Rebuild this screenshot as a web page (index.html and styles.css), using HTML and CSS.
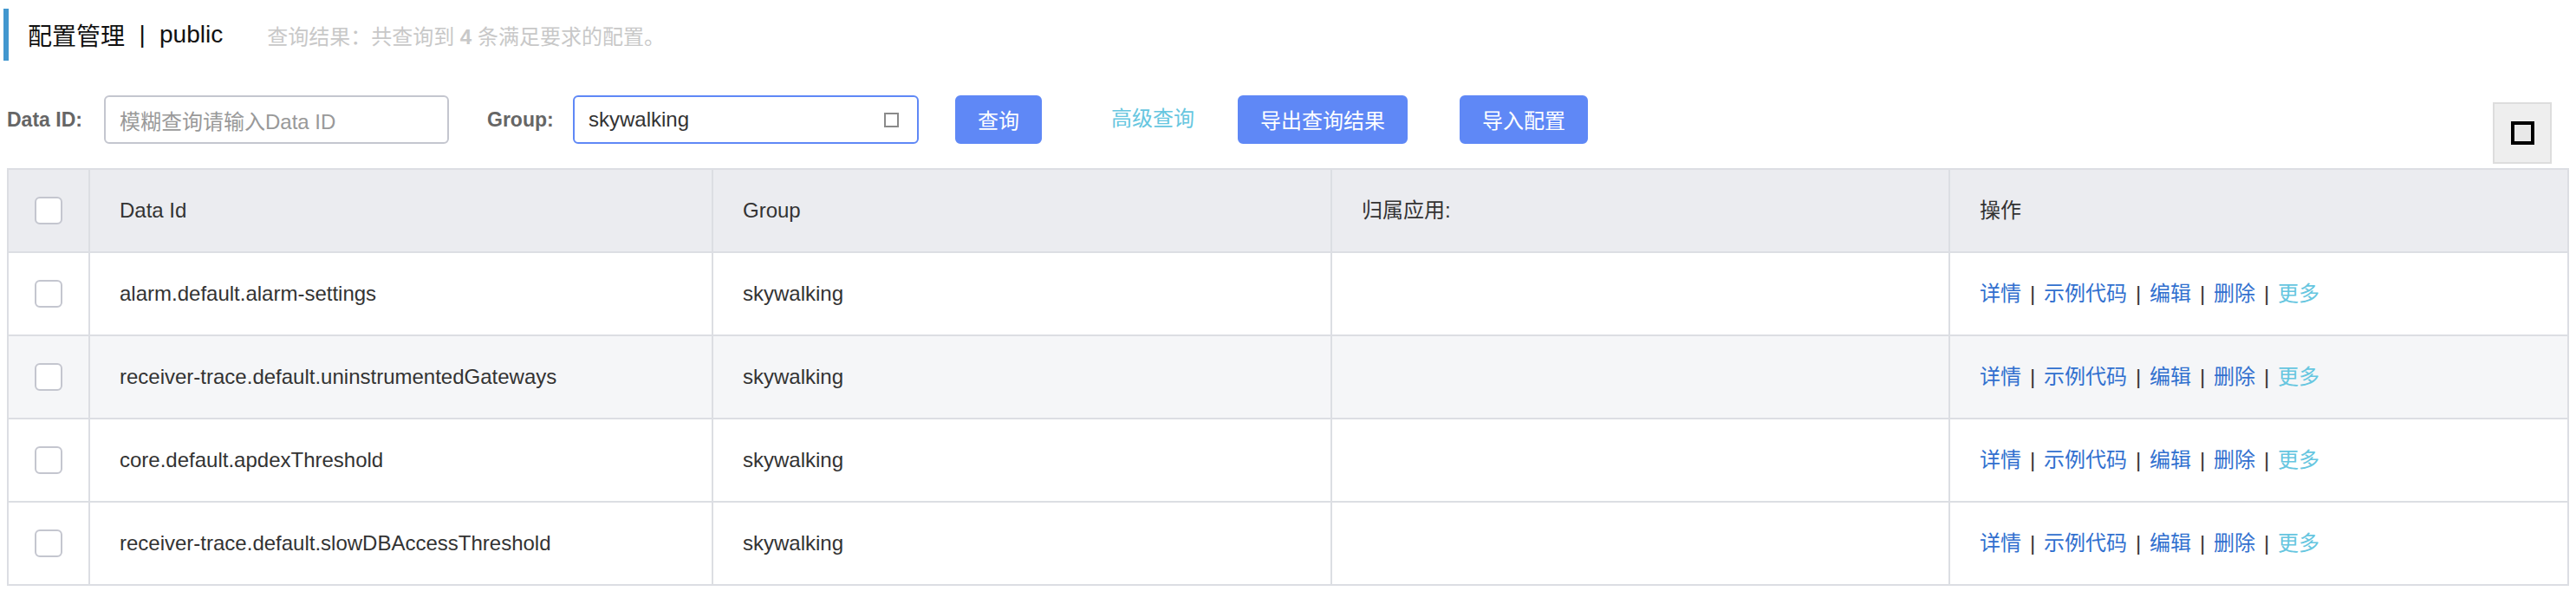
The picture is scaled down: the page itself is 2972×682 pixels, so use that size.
FILE: index.html
```html
<!DOCTYPE html>
<html lang="zh-CN">
<head>
<meta charset="utf-8">
<title>配置管理</title>
<link rel="stylesheet" href="styles.css">
</head>
<body>
<div class="page">
  <div class="page-title">
    <span class="title-main">配置管理</span><span class="title-sep">|</span><span class="title-main">public</span>
    <span class="title-desc">查询结果：共查询到 <b>4</b> 条满足要求的配置。</span>
  </div>

  <div class="toolbar">
    <label class="form-label label-dataid">Data ID:</label>
    <div class="input"><span class="placeholder">模糊查询请输入Data ID</span></div>
    <label class="form-label label-group">Group:</label>
    <div class="input input-focus"><span class="value">skywalking</span><span class="clear-icon"></span></div>
    <button class="btn btn-query">查询</button>
    <a class="link-advanced">高级查询</a>
    <button class="btn btn-export">导出查询结果</button>
    <button class="btn btn-import">导入配置</button>
    <div class="toggle-btn"><span class="toggle-square"></span></div>
  </div>

  <table class="config-table">
    <colgroup>
      <col class="col-check">
      <col class="col-id">
      <col class="col-group">
      <col class="col-app">
      <col>
    </colgroup>
    <thead>
      <tr>
        <th class="cell-check"><span class="checkbox"></span></th>
        <th>Data Id</th>
        <th>Group</th>
        <th class="cjk">归属应用:</th>
        <th class="cjk">操作</th>
      </tr>
    </thead>
    <tbody>
      <tr>
        <td class="cell-check"><span class="checkbox"></span></td>
        <td>alarm.default.alarm-settings</td>
        <td>skywalking</td>
        <td></td>
        <td class="actions cjk"><a>详情</a><span class="sep">|</span><a>示例代码</a><span class="sep">|</span><a>编辑</a><span class="sep">|</span><a>删除</a><span class="sep">|</span><a class="more">更多</a></td>
      </tr>
      <tr class="row-hover">
        <td class="cell-check"><span class="checkbox"></span></td>
        <td>receiver-trace.default.uninstrumentedGateways</td>
        <td>skywalking</td>
        <td></td>
        <td class="actions cjk"><a>详情</a><span class="sep">|</span><a>示例代码</a><span class="sep">|</span><a>编辑</a><span class="sep">|</span><a>删除</a><span class="sep">|</span><a class="more">更多</a></td>
      </tr>
      <tr>
        <td class="cell-check"><span class="checkbox"></span></td>
        <td>core.default.apdexThreshold</td>
        <td>skywalking</td>
        <td></td>
        <td class="actions cjk"><a>详情</a><span class="sep">|</span><a>示例代码</a><span class="sep">|</span><a>编辑</a><span class="sep">|</span><a>删除</a><span class="sep">|</span><a class="more">更多</a></td>
      </tr>
      <tr>
        <td class="cell-check"><span class="checkbox"></span></td>
        <td>receiver-trace.default.slowDBAccessThreshold</td>
        <td>skywalking</td>
        <td></td>
        <td class="actions cjk"><a>详情</a><span class="sep">|</span><a>示例代码</a><span class="sep">|</span><a>编辑</a><span class="sep">|</span><a>删除</a><span class="sep">|</span><a class="more">更多</a></td>
      </tr>
    </tbody>
  </table>
</div>
</body>
</html>
```

FILE: styles.css
```css
html, body {
  margin: 0;
  padding: 0;
  background: #ffffff;
}

body {
  font-family: "Liberation Sans", "Noto Sans CJK SC", sans-serif;
  color: #333333;
  font-size: 24px;
}

.page {
  padding: 0 8px;
}

/* ---------- title ---------- */
.page-title {
  display: flex;
  align-items: center;
  height: 60px;
  margin: 10px 0 0 -4px;
  padding-left: 22px;
  border-left: 6px solid #4297cf;
}

.title-main {
  font-size: 28px;
  color: #111111;
}

.title-sep {
  display: inline-block;
  width: 40px;
  text-align: center;
  font-size: 28px;
  color: #111111;
}

.title-desc {
  margin-left: 51px;
  font-size: 24px;
  color: #c8c8c8;
}

.title-desc b {
  font-weight: bold;
}

/* ---------- toolbar ---------- */
.toolbar {
  display: flex;
  align-items: flex-start;
  margin-top: 40px;
}

.form-label {
  height: 56px;
  line-height: 56px;
  font-size: 23px;
  font-weight: bold;
  color: #666666;
}

.label-dataid {
  width: 112px;
}

.label-group {
  width: 99px;
  margin-left: 44px;
}

.input {
  box-sizing: border-box;
  width: 398px;
  height: 56px;
  border: 2px solid #c4c6cf;
  border-radius: 6px;
  padding: 0 16px;
  display: flex;
  align-items: center;
  font-size: 24px;
}

.input-focus {
  width: 399px;
  border-color: #5f88f6;
}

.placeholder {
  color: #999999;
}

.value {
  flex: 1;
  color: #333333;
}

.clear-icon {
  width: 13px;
  height: 13px;
  border: 2px solid #8a8a8a;
  margin-right: 5px;
}

.btn {
  box-sizing: border-box;
  height: 56px;
  border: 2px solid #5f88f6;
  border-radius: 6px;
  background: #5f88f6;
  color: #ffffff;
  font-family: inherit;
  font-size: 24px;
  padding: 0 0 2px;
  text-align: center;
}

.btn-query {
  width: 100px;
  margin-left: 42px;
}

.link-advanced {
  height: 56px;
  line-height: 54px;
  margin-left: 80px;
  font-size: 24px;
  color: #66c6e0;
}

.btn-export {
  width: 196px;
  margin-left: 50px;
}

.btn-import {
  width: 148px;
  margin-left: 60px;
}

.toggle-btn {
  box-sizing: border-box;
  width: 68px;
  height: 71px;
  margin: 8px 20px 0 auto;
  background: #eeeeee;
  border: 2px solid #dddddd;
  display: flex;
  align-items: center;
  justify-content: center;
}

.toggle-square {
  box-sizing: border-box;
  width: 27px;
  height: 27px;
  border: 4px solid #000000;
  background: #e8e8e8;
}

/* ---------- table ---------- */
.config-table {
  width: 100%;
  margin-top: 5px;
  border-collapse: collapse;
  table-layout: fixed;
  border: 2px solid #dcdee3;
}

.col-check { width: 94px; }
.col-id { width: 719px; }
.col-group { width: 714px; }
.col-app { width: 713px; }

.config-table th,
.config-table td {
  box-sizing: border-box;
  height: 96px;
  padding: 0 34px;
  border: 2px solid #dcdee3;
  text-align: left;
  vertical-align: middle;
  font-size: 24px;
  font-weight: normal;
  color: #333333;
  white-space: nowrap;
}

.config-table th.cjk,
.config-table td.cjk {
  padding-bottom: 6px;
}

.config-table thead th {
  background: #ebecf0;
}

.config-table tbody tr {
  background: #ffffff;
}

.config-table tbody tr.row-hover {
  background: #f5f6f8;
}

.config-table .cell-check {
  padding: 0;
  text-align: center;
}

.checkbox {
  display: inline-block;
  box-sizing: border-box;
  width: 32px;
  height: 32px;
  border: 2px solid #c4c6cf;
  border-radius: 6px;
  background: #ffffff;
  vertical-align: middle;
}

.actions a {
  color: #3170cf;
}

.actions a.more {
  color: #66c6e0;
}

.actions .sep {
  display: inline-block;
  width: 26px;
  text-align: center;
  color: #333333;
}
```
